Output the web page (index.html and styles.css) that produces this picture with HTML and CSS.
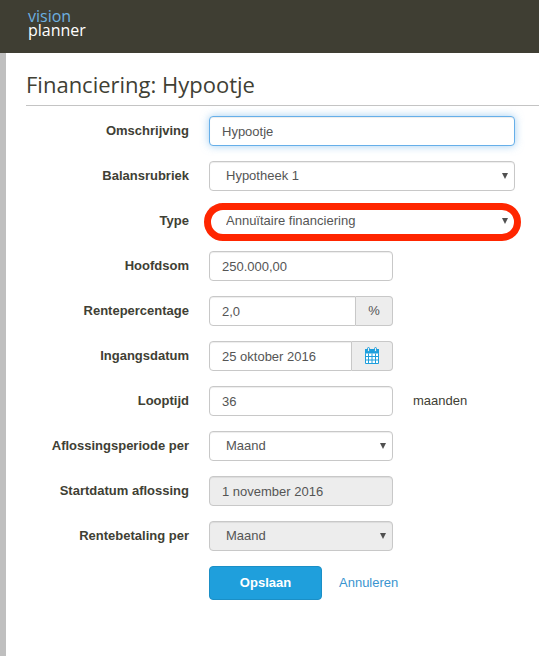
FILE: index.html
```
<!DOCTYPE html>
<html lang="nl">
<head>
    <meta charset="UTF-8">
    <meta name="viewport" content="width=device-width, initial-scale=1.0">
    <title>Financiering: Hypootje</title>
    <link rel="stylesheet" href="styles.css">
</head>
<body>
<header class="topbar">
    <a class="logo" href="#"><span class="logo-vision">vision</span><span>planner</span></a>
</header>

<main class="content">
    <h1>Financiering: Hypootje</h1>

    <form>
        <div class="row">
            <label for="omschrijving">Omschrijving</label>
            <div class="field">
                <input type="text" id="omschrijving" value="Hypootje" autocomplete="off">
            </div>
        </div>

        <div class="row">
            <label for="balansrubriek">Balansrubriek</label>
            <div class="field select">
                <select id="balansrubriek">
                    <option>Hypotheek 1</option>
                </select>
            </div>
        </div>

        <div class="row">
            <label for="type">Type</label>
            <div class="field select highlight">
                <select id="type">
                    <option>Annuïtaire financiering</option>
                </select>
            </div>
        </div>

        <div class="row">
            <label for="hoofdsom">Hoofdsom</label>
            <div class="field short">
                <input type="text" id="hoofdsom" value="250.000,00">
            </div>
        </div>

        <div class="row">
            <label for="rente">Rentepercentage</label>
            <div class="field short">
                <input type="text" id="rente" value="2,0">
                <span class="addon">%</span>
            </div>
        </div>

        <div class="row">
            <label for="ingangsdatum">Ingangsdatum</label>
            <div class="field short">
                <input type="text" id="ingangsdatum" value="25 oktober 2016">
                <button type="button" class="addon addon-date" aria-label="Kies datum">
                    <svg width="16" height="18" viewBox="0 0 16 18">
                        <path class="cal-head" d="M1 2h14v5H1z"/>
                        <path class="cal-grid" d="M1.5 6.5v10h13v-10M4.5 6.5v10M8 6.5v10M11.5 6.5v10M1.5 9.5h13M1.5 13h13"/>
                        <rect class="cal-ring" x="3.5" y=".5" width="2" height="4" rx="1"/>
                        <rect class="cal-ring" x="10.5" y=".5" width="2" height="4" rx="1"/>
                    </svg>
                </button>
            </div>
        </div>

        <div class="row">
            <label for="looptijd">Looptijd</label>
            <div class="field short">
                <input type="text" id="looptijd" value="36">
            </div>
            <span class="unit">maanden</span>
        </div>

        <div class="row">
            <label for="aflossing">Aflossingsperiode per</label>
            <div class="field short select">
                <select id="aflossing">
                    <option>Maand</option>
                </select>
            </div>
        </div>

        <div class="row">
            <label for="startdatum">Startdatum aflossing</label>
            <div class="field short">
                <input type="text" id="startdatum" value="1 november 2016" disabled>
            </div>
        </div>

        <div class="row">
            <label for="rentebetaling">Rentebetaling per</label>
            <div class="field short select">
                <select id="rentebetaling" disabled>
                    <option>Maand</option>
                </select>
            </div>
        </div>

        <div class="actions">
            <button type="submit" class="save">Opslaan</button>
            <a href="#">Annuleren</a>
        </div>
    </form>
</main>
<script>
    // Start typing at the end of the description
    const omschrijving = document.getElementById('omschrijving');
    omschrijving.focus();
    omschrijving.setSelectionRange(omschrijving.value.length, omschrijving.value.length);
</script>
</body>
</html>
```
FILE: styles.css
```
* {
    box-sizing: border-box;
}

body {
    margin: 0;
    min-height: 100vh;
    display: flex;
    flex-direction: column;
    font-family: "Liberation Sans", Arial, sans-serif;
    font-size: 13px;
    line-height: 20px;
    color: #404034;
    background-color: #fff;
}

a {
    color: #3a94cf;
    text-decoration: none;
}

.topbar {
    display: flex;
    padding: 9px 28px 16px;
    background-color: #3f3e33;
}

.logo {
    display: flex;
    flex-direction: column;
    font-family: "Open Sans", sans-serif;
    font-size: 16px;
    line-height: 14px;
    color: #fff;
}

.logo-vision {
    color: #6cb0e0;
}

.content {
    flex: 1;
    padding: 15px 0 20px 20px;
    border-left: 6px solid #bfbfbf;
}

h1 {
    margin: 0 0 10px;
    padding-bottom: 5px;
    border-bottom: 1px solid #c4c4c4;
    font-family: "Open Sans", sans-serif;
    font-size: 22px;
    font-weight: 400;
    line-height: 32px;
}

form {
    padding-right: 24px;
}

.row {
    display: flex;
    align-items: center;
    margin-bottom: 15px;
}

.row label {
    flex: 0 0 163px;
    margin-right: 20px;
    font-weight: bold;
    text-align: right;
}

.field {
    position: relative;
    display: flex;
    flex: 1;
    min-width: 0;
}

.short {
    flex: 0 1 184px;
}

input,
select {
    flex: 1;
    min-width: 0;
    height: 30px;
    padding: 0 12px;
    border: 1px solid #c8c8c8;
    border-radius: 4px;
    font: inherit;
    color: #555;
    background-color: #fff;
    box-shadow: inset 0 1px 1px rgba(0, 0, 0, 0.075);
}

select {
    appearance: none;
    padding: 0 16px;
}

input:focus {
    outline: none;
    border-color: #66afe9;
    box-shadow: inset 0 1px 1px rgba(0, 0, 0, 0.075), 0 0 8px rgba(102, 175, 233, 0.6);
}

input:disabled,
select:disabled {
    background-color: #ededed;
    color: #555;
    opacity: 1;
}

/* Dropdown arrow */
.select::after {
    content: "";
    position: absolute;
    top: 12px;
    right: 7px;
    border: 3px solid transparent;
    border-top: 6px solid #505050;
    border-bottom: 0;
    pointer-events: none;
}

/* Red marker around the field */
.highlight::before {
    content: "";
    position: absolute;
    inset: -3px -6px -5px -5px;
    border: 7px solid #ff2600;
    border-radius: 20px;
    pointer-events: none;
}

.field input:not(:last-child) {
    border-radius: 4px 0 0 4px;
}

.addon {
    display: flex;
    align-items: center;
    justify-content: center;
    width: 37px;
    padding: 0;
    border: 1px solid #c8c8c8;
    border-left: 0;
    border-radius: 0 4px 4px 0;
    font: inherit;
    color: #555;
    background-color: #ededed;
}

.addon-date {
    width: 41px;
}

.cal-head {
    fill: #1f9fdc;
}

.cal-grid {
    fill: #fff;
    stroke: #1f9fdc;
}

.cal-ring {
    fill: #ededed;
    stroke: #1f9fdc;
}

.unit {
    margin-left: 20px;
}

.actions {
    display: flex;
    align-items: center;
    gap: 17px;
    padding-left: 183px;
}

.save {
    width: 113px;
    height: 34px;
    border: 1px solid #1b8fc6;
    border-radius: 4px;
    font: inherit;
    font-weight: bold;
    color: #fff;
    background-color: #1f9fdc;
}
```
